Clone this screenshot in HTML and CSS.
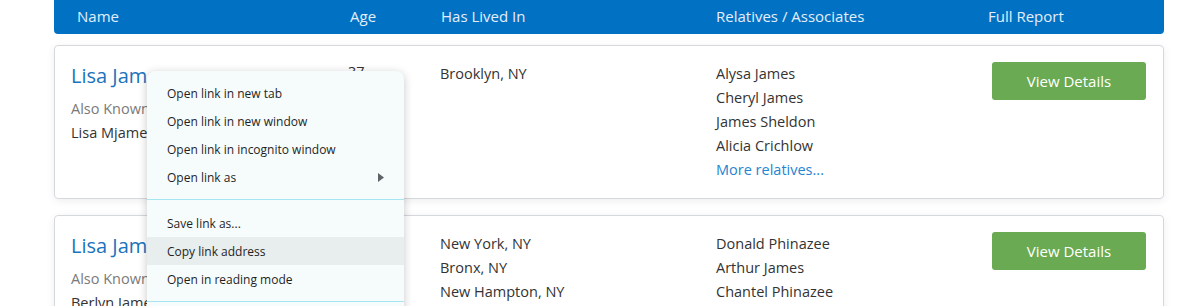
FILE: index.html
```html
<!DOCTYPE html>
<html lang="en">
<head>
    <meta charset="UTF-8">
    <meta name="viewport" content="width=device-width, initial-scale=1.0">
    <title>Search Results</title>
    <link rel="stylesheet" href="styles.css">
</head>
<body>
    <div class="results">
        <div class="results-head">
            <div>Name</div>
            <div>Age</div>
            <div>Has Lived In</div>
            <div>Relatives / Associates</div>
            <div>Full Report</div>
        </div>

        <div class="person-card">
            <div class="person">
                <a href="#" class="person-name">Lisa James</a>
                <div class="aka-label">Also Known As:</div>
                <div>Lisa Mjames</div>
            </div>
            <div class="age">37</div>
            <div class="lines">
                <div>Brooklyn, NY</div>
            </div>
            <div class="lines">
                <div>Alysa James</div>
                <div>Cheryl James</div>
                <div>James Sheldon</div>
                <div>Alicia Crichlow</div>
                <a href="#" class="more-link">More relatives...</a>
            </div>
            <div>
                <button class="details-btn">View Details</button>
            </div>
        </div>

        <div class="person-card">
            <div class="person">
                <a href="#" class="person-name">Lisa James</a>
                <div class="aka-label">Also Known As:</div>
                <div>Berlyn James</div>
            </div>
            <div class="age">52</div>
            <div class="lines">
                <div>New York, NY</div>
                <div>Bronx, NY</div>
                <div>New Hampton, NY</div>
            </div>
            <div class="lines">
                <div>Donald Phinazee</div>
                <div>Arthur James</div>
                <div>Chantel Phinazee</div>
            </div>
            <div>
                <button class="details-btn">View Details</button>
            </div>
        </div>
    </div>

    <!-- browser context menu over the first name link -->
    <div class="context-menu">
        <div class="menu-item">Open link in new tab</div>
        <div class="menu-item">Open link in new window</div>
        <div class="menu-item">Open link in incognito window</div>
        <div class="menu-item has-sub">Open link as
            <svg class="sub-arrow" width="6" height="9" viewBox="0 0 6 9"><path d="M0 0 L6 4.5 L0 9 Z" fill="#5f6368"/></svg>
        </div>
        <div class="menu-sep"></div>
        <div class="menu-item">Save link as...</div>
        <div class="menu-item active">Copy link address</div>
        <div class="menu-item">Open in reading mode</div>
        <div class="menu-sep"></div>
        <div class="menu-item">Inspect</div>
    </div>
</body>
</html>
```

FILE: styles.css
```css
* {
    margin: 0;
    padding: 0;
    box-sizing: border-box;
}

body {
    font-family: "Open Sans", "Noto Sans", sans-serif;
    font-size: 14.5px;
    color: #333;
    background: #fff;
}

.results {
    width: 1110px;
    margin-left: 54px;
}

.results-head {
    display: grid;
    grid-template-columns: 273px 91px 275px 272px 1fr;
    height: 34px;
    align-items: center;
    padding-left: 23px;
    padding-bottom: 2px;
    background: #0172c3;
    color: #e4eefa;
    font-size: 15px;
    border-radius: 0 0 4px 4px;
    margin-bottom: 11px;
}

.person-card {
    display: grid;
    grid-template-columns: 276px 93px 276px 276px 154px;
    padding: 16px 18px 16px 16px;
    border: 1px solid #d5d8dc;
    border-radius: 4px;
    box-shadow: 0 2px 8px rgba(0, 0, 0, 0.07);
    margin-bottom: 16px;
    line-height: 24px;
}

.person-name {
    display: block;
    font-size: 20px;
    color: #1b72bd;
    text-decoration: none;
    margin-top: 2px;
    margin-bottom: 9px;
}

.aka-label {
    color: #7a7a7a;
}

.age {
    padding-left: 1px;
    margin-top: -2px;
}

.more-link {
    color: #2584d0;
    text-decoration: none;
}

.details-btn {
    width: 154px;
    height: 38px;
    background: #6aaa53;
    color: #fff;
    border: none;
    border-radius: 3px;
    font-family: inherit;
    font-size: 15px;
    padding-bottom: 1px;
    cursor: pointer;
}

.context-menu {
    position: absolute;
    left: 147px;
    top: 71px;
    width: 257px;
    padding: 8px 0;
    background: #f6fcfc;
    border-radius: 8px;
    box-shadow: 0 2px 10px rgba(0, 0, 0, 0.22);
    font-size: 12px;
    color: #1f1f1f;
}

.menu-item {
    height: 28px;
    line-height: 29px;
    padding-left: 20px;
    position: relative;
}

.menu-item.active {
    background: #e8eded;
}

.sub-arrow {
    position: absolute;
    right: 20px;
    top: 10px;
}

.menu-sep {
    height: 1px;
    background: #a6e6f2;
    margin: 8px 0 9px;
}
```
